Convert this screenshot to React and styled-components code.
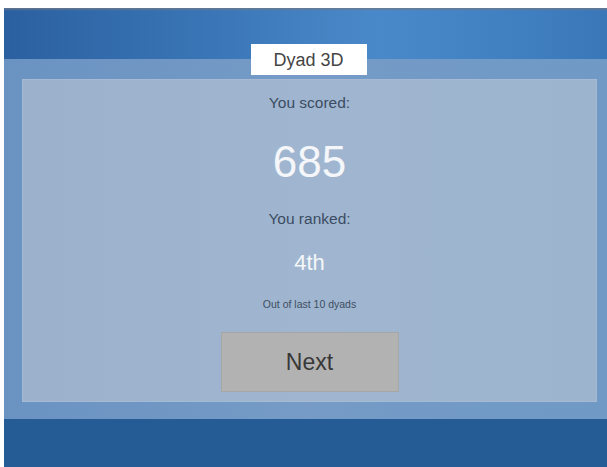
import React from "react";
import styled, { createGlobalStyle } from "styled-components";

const GlobalStyle = createGlobalStyle`
  html, body {
    margin: 0;
    padding: 0;
    background: #ffffff;
  }
  body {
    font-family: "Liberation Sans", Arial, sans-serif;
  }
`;

const Screen = styled.div`
  margin: 8px 0 0 4px;
  width: 603px;
  height: 459px;
  display: flex;
  flex-direction: column;
  overflow: hidden;
`;

const TopBar = styled.header`
  height: 51px;
  flex: none;
  display: flex;
  justify-content: center;
  align-items: flex-end;
  background:
    linear-gradient(180deg, rgba(110, 120, 135, 0.9) 0px, rgba(110, 120, 135, 0) 3px),
    linear-gradient(90deg, #2b60a0 0%, #3873b4 30%, #4a89c9 62%, #4282c3 80%, #3a77b9 100%);
  position: relative;
  z-index: 1;
`;

const TitleTag = styled.div`
  width: 116px;
  height: 31px;
  margin-bottom: -16px;
  margin-left: 6px;
  background: #ffffff;
  color: #454545;
  font-size: 18px;
  display: flex;
  align-items: center;
  justify-content: center;
  padding-top: 1px;
  box-sizing: border-box;
`;

const Band = styled.main`
  height: 360px;
  flex: none;
  box-sizing: border-box;
  padding: 20px 10px 17px 18px;
  background: linear-gradient(90deg, #6b93c2 0%, #759bc6 50%, #7099c6 100%);
  display: flex;
`;

const Panel = styled.section`
  flex: 1;
  box-sizing: border-box;
  padding-top: 15px;
  background: linear-gradient(90deg, #9bb1cc 0%, #a0b6d0 50%, #9db4cf 100%);
  border: 1px solid #a6bbd3;
  display: flex;
  flex-direction: column;
  align-items: center;
`;

const Line = styled.div`
  font-size: ${(p) => p.$size}px;
  line-height: 1;
  color: ${(p) => p.$color || "#3b4c62"};
  margin-top: ${(p) => p.$gap || 0}px;
  white-space: nowrap;
`;

const NextButton = styled.button`
  margin-top: 23px;
  width: 178px;
  height: 60px;
  background: #b2b2b2;
  border: 1px solid #a6a6a6;
  color: #383838;
  font-family: "Liberation Sans", Arial, sans-serif;
  font-size: 23px;
  padding: 0;
  cursor: pointer;
`;

const BottomBar = styled.footer`
  flex: 1;
  background: #265c96;
`;

export default function App() {
  return (
    <>
      <GlobalStyle />
      <Screen>
        <TopBar>
          <TitleTag>Dyad 3D</TitleTag>
        </TopBar>
        <Band>
          <Panel>
            <Line $size={15.5}>You scored:</Line>
            <Line $size={44} $gap={29} $color="#f4f6f9">685</Line>
            <Line $size={15.5} $gap={27}>You ranked:</Line>
            <Line $size={22} $gap={26} $color="#f4f6f9">4th</Line>
            <Line $size={10.5} $gap={24.5} $color="#3e4e63">Out of last 10 dyads</Line>
            <NextButton>Next</NextButton>
          </Panel>
        </Band>
        <BottomBar />
      </Screen>
    </>
  );
}
